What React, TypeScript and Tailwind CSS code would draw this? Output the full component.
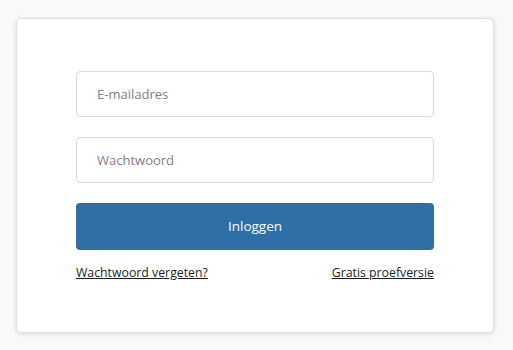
export default function App() {
  return (
    <div className="min-h-screen bg-[#f9f9f9] pl-4 pt-[18px] font-['Open_Sans',sans-serif]">
      <div className="w-[478px] rounded-[5px] border border-[#e0e0e0] bg-white px-[59px] pb-[50px] pt-[52px] shadow-[0_1px_5px_rgba(0,0,0,0.14)]">
        <form className="flex flex-col" onSubmit={(e) => e.preventDefault()}>
          <input
            type="email"
            placeholder="E-mailadres"
            className="h-[46px] w-full rounded-[4px] border border-[#dadada] bg-white px-5 text-[13px] text-[#333] placeholder:text-[#7c8188] focus:outline-none"
          />
          <input
            type="password"
            placeholder="Wachtwoord"
            className="mt-5 h-[46px] w-full rounded-[4px] border border-[#dadada] bg-white px-5 text-[13px] text-[#333] placeholder:text-[#7c8188] focus:outline-none"
          />
          <button
            type="submit"
            className="mt-5 h-[47px] w-full rounded-[4px] bg-[#2e6fa7] text-[13.5px] text-white"
          >
            Inloggen
          </button>
          <div className="mt-[14px] flex justify-between text-[12.3px] leading-[18px] text-[#1d1d1d]">
            <a href="#" className="underline">Wachtwoord vergeten?</a>
            <a href="#" className="underline">Gratis proefversie</a>
          </div>
        </form>
      </div>
    </div>
  );
}
